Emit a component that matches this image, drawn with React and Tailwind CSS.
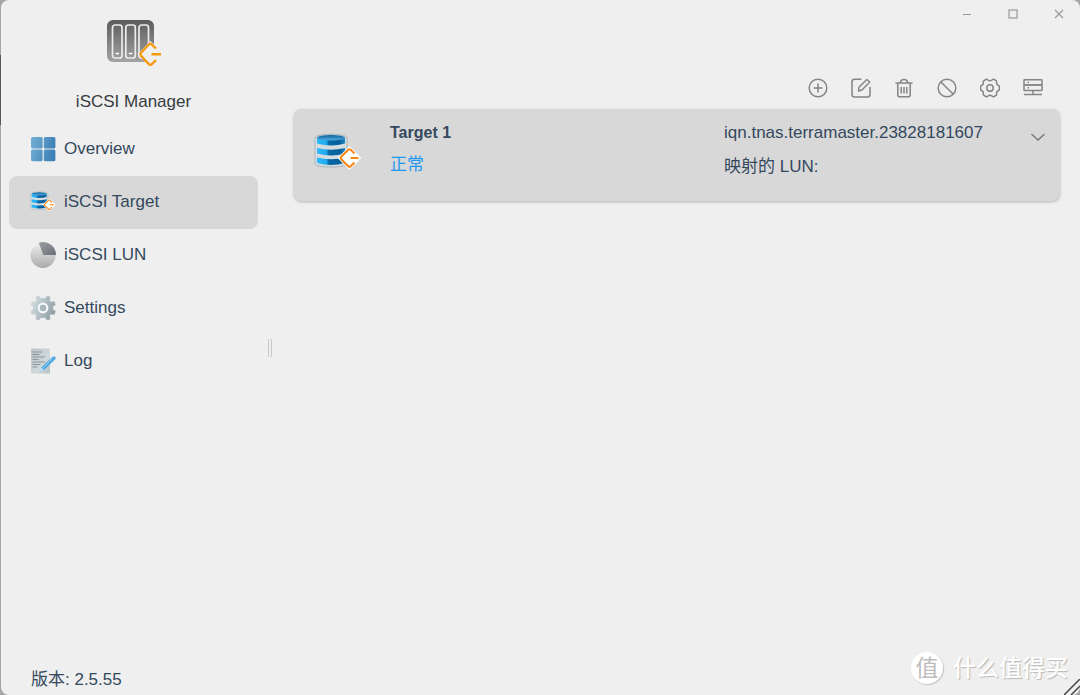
import { useState } from "react";

const ManagerLogo = () => (
  <svg width="56" height="50" viewBox="0 0 56 50" fill="none" aria-hidden="true">
    <defs>
      <linearGradient id="logoBody" x1="0" y1="0" x2="0" y2="1">
        <stop offset="0" stopColor="#5c5c5c" />
        <stop offset="1" stopColor="#a3a3a3" />
      </linearGradient>
    </defs>
    <rect x="1" y="2" width="47" height="42" rx="6" fill="url(#logoBody)" />
    {[6.5, 19.8, 33].map((x) => (
      <g key={x}>
        <rect x={x} y="7" width="9.5" height="33" rx="2.5" stroke="#ececec" strokeWidth="1.7" />
        <path d={`M${x + 3} 35.500h3.5`} stroke="#fff" strokeWidth="1.4" />
      </g>
    ))}
    <path d="M33 36.5 44.5 24.5 55 36.5 44.5 48Z" fill="#efefef" />
    <path d="M47 25.500 44.500 23 31.500 36.500 44.500 49 54 39V33Z" fill="#efefef" />
    <path d="M38.500 36.500 44.500 30v13Z" fill="#efefef" />
    <path
      d="M50 30.5 45.6 26.3Q44.3 25.2 43 26.3L35 34.8Q33.8 36.3 35 37.8L43 46.3Q44.3 47.4 45.6 46.3L50 42.2M45.5 36.3h9.5"
      stroke="#f59a0c"
      strokeWidth="2.4"
    />
  </svg>
);

const OverviewIcon = () => (
  <svg width="26" height="26" viewBox="0 0 26 26" aria-hidden="true">
    <defs>
      <linearGradient id="tiles" gradientUnits="userSpaceOnUse" x1="0" y1="0" x2="26" y2="6">
        <stop offset="0" stopColor="#77b2d6" />
        <stop offset="1" stopColor="#3c81b6" />
      </linearGradient>
    </defs>
    <g fill="url(#tiles)">
      <rect x="1" y="1" width="11.6" height="11.4" rx="1.5" />
      <rect x="13.8" y="1" width="11.6" height="11.4" rx="1.5" />
      <rect x="1" y="13.6" width="11.6" height="11.6" rx="1.5" />
      <rect x="13.8" y="13.6" width="11.6" height="11.6" rx="1.5" />
    </g>
  </svg>
);

const TargetIcon = ({ className }) => (
  <svg className={className} viewBox="0 0 48 38" fill="none" aria-hidden="true">
    <defs>
      <linearGradient id="disk" x1="0" y1="0" x2="1" y2="0">
        <stop offset="0" stopColor="#2db9fa" />
        <stop offset="0.33" stopColor="#22aaf0" />
        <stop offset="0.42" stopColor="#0768a5" />
        <stop offset="0.8" stopColor="#075f99" />
        <stop offset="1" stopColor="#2385c2" />
      </linearGradient>
      <linearGradient id="diskTop" x1="0" y1="0" x2="0" y2="1">
        <stop offset="0" stopColor="#08639f" />
        <stop offset="1" stopColor="#58ade0" />
      </linearGradient>
    </defs>
    <path
      d="M1 5C1 0 33 0 33 5V31C33 35 1 35 1 31Z"
      fill="#d5dde1"
      stroke="#a9b3b9"
      strokeWidth="1"
    />
    {[5, 15, 24.5].map((y) => (
      <path key={y} d={`M3 ${y}Q17 ${y + 3.5} 31 ${y}v5.5Q17 ${y + 9.5} 3 ${y + 5.5}Z`} fill="url(#disk)" />
    ))}
    <ellipse cx="17" cy="4.8" rx="14" ry="2.8" fill="url(#diskTop)" />
    <path d="M25 25 35.5 14.5 46 25 35.5 35.5Z" fill="#fff" stroke="#fff" strokeWidth="2" strokeLinejoin="round" />
    <path
      d="M40.5 20.5 36.5 16.6Q35.5 15.8 34.5 16.6L27 24Q26.2 25 27 26L34.5 33.4Q35.5 34.2 36.5 33.4L40.5 29.5M36.5 25h8"
      stroke="#fb8512"
      strokeWidth="2"
    />
  </svg>
);

const LunIcon = () => (
  <svg width="26" height="26" viewBox="0 0 26 26" aria-hidden="true">
    <defs>
      <linearGradient id="pie" x1="0" y1="0" x2="0" y2="1">
        <stop offset="0" stopColor="#eeeeee" />
        <stop offset="1" stopColor="#aaaaaa" />
      </linearGradient>
      <linearGradient id="slice" x1="0" y1="0" x2="1" y2="1">
        <stop offset="0" stopColor="#9b9fa4" />
        <stop offset="1" stopColor="#6b7077" />
      </linearGradient>
    </defs>
    <circle cx="13" cy="13.5" r="12.5" fill="url(#pie)" />
    <path d="M13.3 13 8.8.8A12.8 12.8 0 0 1 26 13Z" fill="url(#slice)" />
  </svg>
);

const GearIcon = () => (
  <svg width="26" height="26" viewBox="0 0 26 26" aria-hidden="true">
    <defs>
      <linearGradient id="gear" gradientUnits="userSpaceOnUse" x1="1" y1="8" x2="25" y2="18">
        <stop offset="0" stopColor="#d3dde1" />
        <stop offset="1" stopColor="#8f9da2" />
      </linearGradient>
    </defs>
    <g fill="url(#gear)" stroke="url(#gear)" strokeWidth=".8" strokeLinejoin="round">
      <path d="M10.5 3.5 9 1 6 2l.6 3.5-1.800 1.700-3-.5-1 3.100 2.600 1.800v2.800L.8 16.200l1 3.100 3-.4 1.800 1.700L6 24l3 1 1.500-2.500h5L17 25l3-1-.600-3.400 1.800-1.700 3 .4 1-3.100-2.600-1.800v-2.800l2.600-1.800-1-3.100-3 .5-1.800-1.700L20 2 17 1l-1.500 2.500Z" />
    </g>
    <circle cx="13" cy="13" r="5.4" fill="#f5f7f8" />
    <circle cx="13" cy="13" r="3.2" fill="#a9b6bb" />
  </svg>
);

const LogIcon = () => (
  <svg width="26" height="26" viewBox="0 0 26 26" fill="none" aria-hidden="true">
    <defs>
      <linearGradient id="paper" x1="0" y1="0" x2="1" y2="1">
        <stop offset="0" stopColor="#b9c3c7" />
        <stop offset="0.6" stopColor="#d1d9dc" />
        <stop offset="1" stopColor="#b4bfc3" />
      </linearGradient>
    </defs>
    <rect x="1" y=".5" width="19" height="25" rx="1" fill="url(#paper)" />
    <path d="M2.5 4H12M2.5 6.5h7M2.5 9H15M2.5 11.5h6M2.5 14H15M2.5 16.5h8M2.5 19h5" stroke="#8b959a" strokeWidth="1.1" />
    <path d="m10 23.5 1.3-4L23 8.500l2.500.200V11L14 22Z" fill="#4ea8e2" />
    <path d="m10 23.5 1.3-4 2.7 2.5Z" fill="#c6e4f7" />
    <path d="m12.5 20.5 10-10" stroke="#93cdf2" strokeWidth="1" />
  </svg>
);

const navItems = [
  { id: "overview", label: "Overview", icon: <OverviewIcon /> },
  { id: "target", label: "iSCSI Target", icon: <TargetIcon className="w-[26px] h-[21px]" /> },
  { id: "lun", label: "iSCSI LUN", icon: <LunIcon /> },
  { id: "settings", label: "Settings", icon: <GearIcon /> },
  { id: "log", label: "Log", icon: <LogIcon /> },
];

const tools = [
  {
    label: "Add",
    shape: (
      <>
        <circle cx="10" cy="10" r="8.8" />
        <path d="M10 5.5v9M5.5 10h9" />
      </>
    ),
  },
  {
    label: "Edit",
    shape: (
      <>
        <path d="M10.5 1.3H3.500Q1 1.300 1 3.800V16.500Q1 19 3.500 19h13q2.500 0 2.500-2.500V9" />
        <path d="m7.500 13 .5-3.800L15.800 1.500 18.800 4l-7.800 8Z" />
      </>
    ),
  },
  {
    label: "Delete",
    shape: (
      <>
        <path d="M1.500 5h17M6.5 4.5Q6.500 1.500 10 1.500t3.500 3" />
        <path d="M3.800 5v12q0 1.800 1.800 1.800h8.800q1.800 0 1.800-1.800V5M7.200 9v6.500M10 9v6.500M12.800 9v6.500" />
      </>
    ),
  },
  {
    label: "Disable",
    shape: (
      <>
        <circle cx="10" cy="10" r="8.8" />
        <path d="m3.700 3.700 12.600 12.600" />
      </>
    ),
  },
  {
    label: "Configure",
    shape: (
      <>
        <path d="M5.800 1.500Q7 .8 8 2q2 1.500 4 0 1-1.200 2.200-.5l1.800 1.100q1 .7.600 2-.2 2 1.400 2.700 1.400.4 1.400 1.700v2q0 1.300-1.400 1.700-1.600.7-1.400 2.700.4 1.300-.6 2l-1.800 1.100Q13 19.200 12 18q-2-1.500-4 0-1 1.200-2.200.5L4 17.400q-1-.7-.6-2 .2-2-1.400-2.700Q.6 12.300.6 11V9Q.6 7.700 2 7.300q1.600-.7 1.400-2.700-.4-1.300.6-2Z" />
        <circle cx="10" cy="10" r="3.2" />
      </>
    ),
  },
  {
    label: "Sessions",
    shape: (
      <>
        <rect x="1" y="1.800" width="18" height="5.200" rx=".5" />
        <rect x="1" y="7" width="18" height="5.500" rx=".5" />
        <path d="M4.500 4.500H6M4.500 9.700H6M10 12.500v4M1 16.500h18" />
      </>
    ),
  },
];

const Sidebar = ({ current, onSelect }) => (
  <aside className="w-[267px] shrink-0 flex flex-col pl-2 pr-2.5 pt-[18px] pb-[3px]">
    <div className="flex flex-col items-center">
      <ManagerLogo />
      <h1 className="mt-[22px] leading-6 text-[#363b40]">iSCSI Manager</h1>
    </div>
    <nav className="mt-[9px] flex flex-col">
      {navItems.map((item) => (
        <button
          key={item.id}
          type="button"
          onClick={() => onSelect(item.id)}
          className={`h-[53px] w-full flex items-center gap-2 pl-[21px] pb-0.5 rounded-lg text-left ${
            current === item.id ? "bg-[#d8d8d8]" : ""
          }`}
        >
          {item.icon}
          <span>{item.label}</span>
        </button>
      ))}
    </nav>
    <footer className="mt-auto pl-[22px] leading-6">版本: 2.5.55</footer>
  </aside>
);

const WindowControls = () => (
  <div className="h-7 flex justify-end gap-[26px] pr-[11px]">
    <button type="button" aria-label="Minimize" className="w-5 flex items-center justify-center">
      <svg width="10" height="10" fill="none" stroke="#999" strokeWidth="1">
        <path d="M1 5.5h8" />
      </svg>
    </button>
    <button type="button" aria-label="Maximize" className="w-5 flex items-center justify-center">
      <svg width="10" height="10" fill="none" stroke="#999" strokeWidth="1.2">
        <rect x="1" y="1" width="8" height="8" />
      </svg>
    </button>
    <button type="button" aria-label="Close" className="w-5 flex items-center justify-center">
      <svg width="10" height="10" fill="none" stroke="#999" strokeWidth="1.2">
        <path d="m1 1 8 8M9 1 1 9" />
      </svg>
    </button>
  </div>
);

const TargetCard = () => (
  <article className="h-[92px] flex items-start rounded-lg bg-[#d8d8d8] shadow-[0_1px_3px_#b4b4b4] pl-5 pr-[14px]">
    <TargetIcon className="mt-6 w-12 h-[38px] shrink-0" />
    <div className="ml-7 flex-1 pt-3">
      <h2 className="text-[16px] leading-6 font-bold">Target 1</h2>
      <p className="mt-2 leading-6 text-[#1e98f0]">正常</p>
    </div>
    <div className="w-[302px] pt-3">
      <p className="leading-6">iqn.tnas.terramaster.23828181607</p>
      <p className="mt-2.5 leading-6">映射的 LUN:</p>
    </div>
    <button type="button" aria-label="Expand" className="mt-[22px] ml-1 w-4 h-3 flex items-center justify-center">
      <svg width="14" height="8" fill="none" stroke="#777" strokeWidth="1.3">
        <path d="m.5 1 6.500 6 6.500-6" />
      </svg>
    </button>
  </article>
);

const Watermark = () => (
  <div className="absolute right-3 bottom-[11px] flex items-center gap-[10px] pointer-events-none">
    <span className="w-8 h-8 rounded-full bg-white flex items-center justify-center text-[23px] leading-8 text-[#bdbdbd] shadow-[1px_1px_1px_#c4c4c4]">
      值
    </span>
    <span className="text-[23px] leading-8 font-medium text-white [text-shadow:1px_1px_1px_#b8b8b8]">什么值得买</span>
  </div>
);

export default function App() {
  const [current, setCurrent] = useState("target");

  return (
    <div className="min-h-screen flex pl-px bg-[linear-gradient(#a5a5a5_55px,#55575b_55px,#55575b_125px,#a5a5a5_125px)] font-['Liberation_Sans','Noto_Sans_CJK_SC',sans-serif] text-[17px] text-[#34495e]">
      <div className="relative flex-1 flex bg-[#efefef] rounded-lg overflow-hidden">
        <Sidebar current={current} onSelect={setCurrent} />
        <div className="w-1 h-[18px] self-center border-x border-[#c8c8c8]" />
        <main className="flex-1 flex flex-col">
          <WindowControls />
          <div className="pl-[22px] pr-5">
            <div className="mt-[50px] mb-[11px] flex justify-end gap-[23px] pr-[17px]">
              {tools.map((tool) => (
                <button key={tool.label} type="button" aria-label={tool.label} title={tool.label}>
                  <svg width="20" height="20" viewBox="0 0 20 20" fill="none" stroke="#858585" strokeWidth="1.5" strokeLinejoin="round">
                    {tool.shape}
                  </svg>
                </button>
              ))}
            </div>
            <TargetCard />
          </div>
        </main>
        <Watermark />
        <svg className="absolute right-0 bottom-0" width="16" height="16" fill="none" stroke="#444" strokeWidth="1.5" aria-hidden="true">
          <path d="M0 16 16 0M7 16l9-9" />
        </svg>
      </div>
    </div>
  );
}
